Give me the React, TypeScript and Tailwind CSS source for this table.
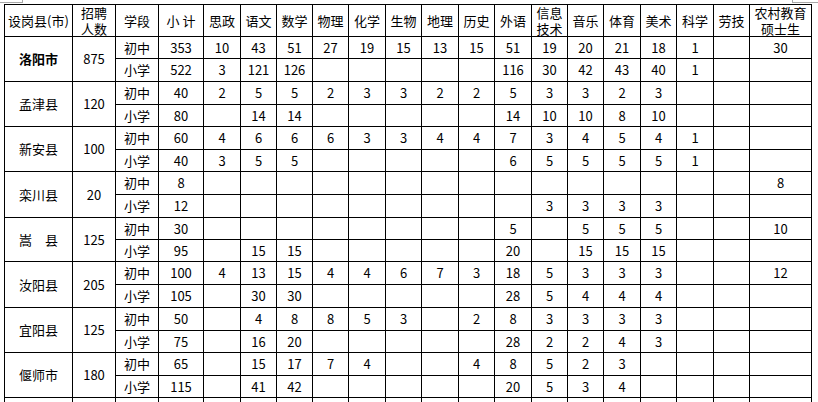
import React from "react";

type County = { name: string; bold?: boolean; total: string; rows: [string[], string[]] };

const E = "";
const data: County[] = [
  {
    name: "洛阳市",
    bold: true,
    total: "875",
    rows: [
      ["353", "10", "43", "51", "27", "19", "15", "13", "15", "51", "19", "20", "21", "18", "1", E, "30"],
      ["522", "3", "121", "126", E, E, E, E, E, "116", "30", "42", "43", "40", "1", E, E],
    ],
  },
  {
    name: "孟津县",
    total: "120",
    rows: [
      ["40", "2", "5", "5", "2", "3", "3", "2", "2", "5", "3", "3", "2", "3", E, E, E],
      ["80", E, "14", "14", E, E, E, E, E, "14", "10", "10", "8", "10", E, E, E],
    ],
  },
  {
    name: "新安县",
    total: "100",
    rows: [
      ["60", "4", "6", "6", "6", "3", "3", "4", "4", "7", "3", "4", "5", "4", "1", E, E],
      ["40", "3", "5", "5", E, E, E, E, E, "6", "5", "5", "5", "5", "1", E, E],
    ],
  },
  {
    name: "栾川县",
    total: "20",
    rows: [
      ["8", E, E, E, E, E, E, E, E, E, E, E, E, E, E, E, "8"],
      ["12", E, E, E, E, E, E, E, E, E, "3", "3", "3", "3", E, E, E],
    ],
  },
  {
    name: "嵩\u3000县",
    total: "125",
    rows: [
      ["30", E, E, E, E, E, E, E, E, "5", E, "5", "5", "5", E, E, "10"],
      ["95", E, "15", "15", E, E, E, E, E, "20", E, "15", "15", "15", E, E, E],
    ],
  },
  {
    name: "汝阳县",
    total: "205",
    rows: [
      ["100", "4", "13", "15", "4", "4", "6", "7", "3", "18", "5", "3", "3", "3", E, E, "12"],
      ["105", E, "30", "30", E, E, E, E, E, "28", "5", "4", "4", "4", E, E, E],
    ],
  },
  {
    name: "宜阳县",
    total: "125",
    rows: [
      ["50", E, "4", "8", "8", "5", "3", E, "2", "8", "3", "3", "3", "3", E, E, E],
      ["75", E, "16", "20", E, E, E, E, E, "28", "2", "2", "4", "3", E, E, E],
    ],
  },
  {
    name: "偃师市",
    total: "180",
    rows: [
      ["65", E, "15", "17", "7", "4", E, E, "4", "8", "5", "2", "3", E, E, E, E],
      ["115", E, "41", "42", E, E, E, E, E, "20", "5", "3", "4", E, E, E, E],
    ],
  },
];

const headers: React.ReactNode[] = [
  "设岗县(市)",
  <>
    招聘
    <br />
    人数
  </>,
  "学段",
  "小 计",
  "思政",
  "语文",
  "数学",
  "物理",
  "化学",
  "生物",
  "地理",
  "历史",
  "外语",
  <>
    信息
    <br />
    技术
  </>,
  "音乐",
  "体育",
  "美术",
  "科学",
  "劳技",
  <>
    农村教育
    <br />
    硕士生
  </>,
];

const cell = "bg-white flex items-center justify-center text-center";

export default function App() {
  return (
    <div className="relative w-[818px] h-[402px] overflow-hidden bg-white text-black font-['Noto_Sans_CJK_SC',sans-serif]">
      <div className="absolute left-0 top-[2px] w-[23px] h-px bg-[#a8a8a8]" />
      <div className="absolute left-[22px] top-0 w-px h-[3px] bg-[#a8a8a8]" />
      <div className="absolute left-[792px] top-[2px] w-[26px] h-px bg-[#a8a8a8]" />
      <div className="absolute left-[792px] top-0 w-px h-[3px] bg-[#a8a8a8]" />
      <div className="pl-[4px] pt-[4px]">
        <div className="inline-grid p-px gap-px bg-black grid-cols-[67px_42px_42px_44px_36px_35px_35px_35px_36px_35px_36px_35px_36px_35px_35px_36px_35px_36px_35px_61px] grid-rows-[31px_21px_22px_22px_21px_22px_21px_22px_22px_21px_21px_22px_22px_22px_21px_22px_21px_22px_22px]">
          {headers.map((h, i) => (
            <div key={"h" + i} className={`${cell} text-[13px] leading-[16px]`}>
              <span>{h}</span>
            </div>
          ))}
          {data.map((c) => (
            <React.Fragment key={c.name}>
              <div className={`${cell} row-span-2 text-[13px] ${c.bold ? "font-bold" : ""}`}>{c.name}</div>
              <div className={`${cell} row-span-2 text-[13px]`}>{c.total}</div>
              {c.rows.map((r, ri) => (
                <React.Fragment key={ri}>
                  <div className={`${cell} text-[13px]`}>{ri === 0 ? "初中" : "小学"}</div>
                  {r.map((v, vi) => (
                    <div key={vi} className={`${cell} text-[13px]`}>
                      {v}
                    </div>
                  ))}
                </React.Fragment>
              ))}
            </React.Fragment>
          ))}
          <div className={`${cell} row-span-2`} />
          <div className={`${cell} row-span-2`} />
          {Array.from({ length: 36 }).map((_, i) => (
            <div key={"x" + i} className={cell} />
          ))}
        </div>
      </div>
    </div>
  );
}
